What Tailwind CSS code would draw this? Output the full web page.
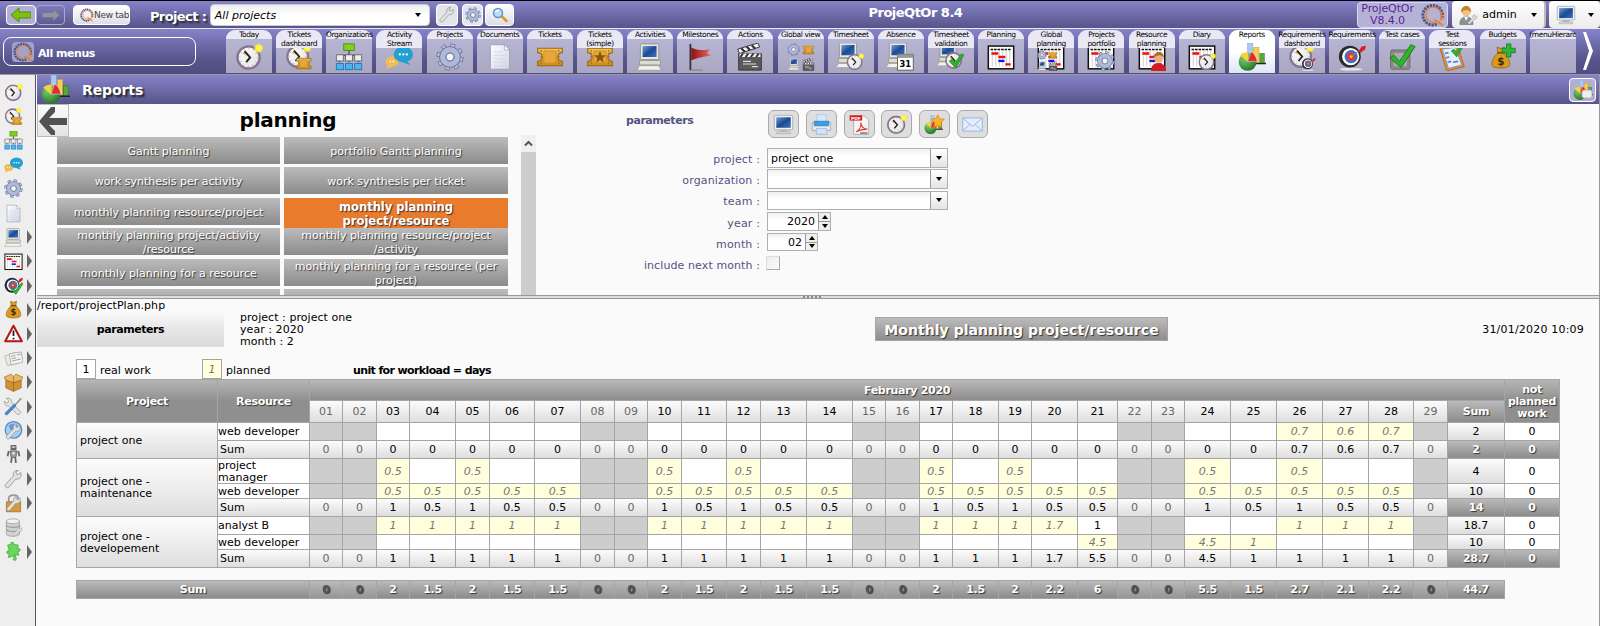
<!DOCTYPE html>
<html lang="en">
<head>
<meta charset="utf-8">
<title>ProjeQtOr 8.4</title>
<script src="https://cdn.jsdelivr.net/npm/@tailwindcss/browser@4"></script>
</head>
<body class="w-[1600px] h-[626px] overflow-hidden bg-[#fafafa] text-black text-[11px] leading-3 font-['DejaVu_Sans',Verdana,sans-serif]">

<svg class="absolute w-0 h-0">
  <defs>
    <linearGradient id="gScreen" x1="0" y1="0" x2="1" y2="1"><stop offset="0" stop-color="#6fa0dc"/><stop offset=".5" stop-color="#1c4a94"/><stop offset="1" stop-color="#3a72bd"/></linearGradient>
    <linearGradient id="gGold" x1="0" y1="0" x2="0" y2="1"><stop offset="0" stop-color="#f5c55a"/><stop offset="1" stop-color="#d08a16"/></linearGradient>
    <linearGradient id="gDoc" x1="0" y1="0" x2="1" y2="1"><stop offset="0" stop-color="#ffffff"/><stop offset="1" stop-color="#cfd3e6"/></linearGradient>
    <linearGradient id="gRed" x1="0" y1="0" x2="1" y2="0"><stop offset="0" stop-color="#8c0f14"/><stop offset="1" stop-color="#e96a6a"/></linearGradient>
    <radialGradient id="gPie" cx=".35" cy=".3" r=".8"><stop offset="0" stop-color="#7fd070"/><stop offset="1" stop-color="#1c6e22"/></radialGradient>
    <radialGradient id="gSun"><stop offset="0" stop-color="#fffb60"/><stop offset=".6" stop-color="#fbf13c"/><stop offset="1" stop-color="#fbf13c" stop-opacity=".2"/></radialGradient>
    <linearGradient id="gFace" x1="0" y1="0" x2="1" y2="1"><stop offset="0" stop-color="#ffffff"/><stop offset="1" stop-color="#e2dfe0"/></linearGradient>
  </defs>
  <symbol id="clockface" viewBox="0 0 32 32"><circle cx="16" cy="16" r="14" fill="url(#gFace)" stroke="#857590" stroke-width="3"/><circle cx="16" cy="16" r="11" fill="none" stroke="#bdb8c2" stroke-dasharray="1 4.7" stroke-width="2"/><path d="M8 11l4-3 5 7z" fill="#d9b54a"/><path d="M11 8l7 8-5 6" fill="none" stroke="#222" stroke-width="2.4"/></symbol>
  <symbol id="clock" viewBox="0 0 32 32"><use href="#clockface" x="1" y="2" width="29" height="29"/><circle cx="27" cy="6" r="5.5" fill="url(#gSun)"/></symbol>
  <symbol id="ticket" viewBox="0 0 32 32"><path d="M2 6h28v5a3 3 0 0 0 0 10v5H2v-5a3 3 0 0 0 0-10z" fill="url(#gGold)" stroke="#9a6410" stroke-width="1.3"/><path d="M6 8v16M26 8v16" stroke="#a87018" stroke-width="1.6" stroke-dasharray="2 1.4"/><path d="M9 9h14v14H9z" fill="#e5a838" stroke="#c08222" stroke-width=".7"/></symbol>
  <symbol id="ticketstar" viewBox="0 0 32 32"><use href="#ticket" width="32" height="32"/><path d="M16 9l2 5h5l-4 3.4 1.6 5.2L16 19.4l-4.600 3.200L13 17.400 9 14h5z" fill="#8a5712"/></symbol>
  <symbol id="tdash" viewBox="0 0 32 32"><use href="#clock" width="30" height="30"/><use href="#ticket" x="11" y="14" width="21" height="19"/></symbol>
  <symbol id="org" viewBox="0 0 32 32"><path d="M16 8v14M5 22v-8h22v8" stroke="#333" fill="none" stroke-width="1.2"/><rect x="10" y="1" width="12" height="7.500" fill="#86cf18" stroke="#3f8f10"/><g fill="#eee" stroke="#666"><rect x="1.500" y="13.500" width="8" height="7"/><rect x="12" y="13.500" width="8" height="7"/><rect x="22.500" y="13.500" width="8" height="7"/></g><g fill="#4fb4ee" stroke="#1a76b8"><rect x="1.500" y="23.500" width="8" height="7"/><rect x="12" y="23.500" width="8" height="7"/><rect x="22.500" y="23.500" width="8" height="7"/></g></symbol>
  <symbol id="chat" viewBox="0 0 32 32"><ellipse cx="8" cy="21" rx="7.500" ry="6" fill="#efbd54"/><path d="M3 24l-1 6 6-3z" fill="#efbd54"/><ellipse cx="21" cy="13" rx="11" ry="9" fill="#21a0d2"/><path d="M24 19l5 6-9-3z" fill="#21a0d2"/><g fill="#fff"><circle cx="17" cy="13" r="1.300"/><circle cx="21" cy="13" r="1.300"/><circle cx="25" cy="13" r="1.300"/><circle cx="6" cy="21" r=".9"/><circle cx="9.500" cy="21" r=".9"/></g></symbol>
  <symbol id="gear" viewBox="0 0 32 32"><circle cx="16" cy="16" r="13" fill="none" stroke="#62719a" stroke-width="5" stroke-dasharray="5.200 5.010"/><circle cx="16" cy="16" r="13" fill="none" stroke="#b8c2dc" stroke-width="3.200" stroke-dasharray="3.800 6.410" stroke-dashoffset="-.7"/><circle cx="16" cy="16" r="8.300" fill="none" stroke="#62719a" stroke-width="8"/><circle cx="16" cy="16" r="8.300" fill="none" stroke="#b0bad6" stroke-width="6.200"/><circle cx="16" cy="16" r="4.500" fill="#f4f4fa" stroke="#62719a"/></symbol>
  <symbol id="doc" viewBox="0 0 32 32"><path d="M5 2h16l6 6v22H5z" fill="url(#gDoc)" stroke="#9a9db5"/><path d="M21 2v6h6z" fill="#fff" stroke="#9a9db5" stroke-width=".8"/><path d="M9 10h10M9 14h14M9 18h14M9 22h14M9 26h14" stroke="#d2d6e6"/></symbol>
  <symbol id="computer" viewBox="0 0 32 32"><rect x="5" y="1" width="21" height="18" rx="1.500" fill="#e9e8e0" stroke="#8c8c84"/><rect x="7.500" y="3.500" width="16" height="12.500" fill="url(#gScreen)"/><path d="M4 20h24v5H4z" fill="#dcdcd4" stroke="#8c8c84" stroke-width=".8"/><path d="M4 26h22l3 5H1z" fill="#f3f3ee" stroke="#9a9a90" stroke-width=".8"/></symbol>
  <symbol id="monitor" viewBox="0 0 32 32"><rect x="2" y="2" width="28" height="22" rx="1.500" fill="#f2f2f2" stroke="#8c9296"/><rect x="5" y="5" width="22" height="16" fill="url(#gScreen)"/><path d="M11 24h10l1 3H10z" fill="#bbb"/><path d="M6 27h20l1 3H5z" fill="#d8dcdc" stroke="#8c9296" stroke-width=".7"/></symbol>
  <symbol id="flag" viewBox="0 0 32 32"><path d="M5 1v30" stroke="#333" stroke-width="2"/><path d="M5 31h14" stroke="#777" stroke-width="1"/><path d="M6 5c7 3 13 4 21 2l-3 5 5 2c-8 2-14 2-23 6z" fill="url(#gRed)"/></symbol>
  <symbol id="clapper" viewBox="0 0 32 32"><path d="M2 7L25 0l2 4.500L4 12z" fill="#f5f5f5" stroke="#222"/><path d="M6 6l4 4M12 4l4 4M18 2.500l4 4" stroke="#333" stroke-width="2.500"/><path d="M3 12h26v19H3z" fill="#5a5a5a" stroke="#333"/><path d="M4 12h24v4H4z" fill="#eee"/><path d="M8 12l-3 4M14 12l-3 4M20 12l-3 4M26 12l-3 4" stroke="#333" stroke-width="2.300"/><path d="M8 21h9M8 24h15M18 27h7" stroke="#ddd" stroke-width="1.300"/></symbol>
  <symbol id="global" viewBox="0 0 32 32"><use href="#gear" x="0" y="0" width="15" height="15"/><use href="#ticket" x="17" y="1" width="15" height="14"/><use href="#computer" x="1" y="17" width="14" height="14"/><use href="#clapper" x="17" y="17" width="15" height="15"/></symbol>
  <symbol id="tsheet" viewBox="0 0 32 32"><use href="#computer" x="-2" y="-1" width="30" height="30"/><use href="#clock" x="10" y="11" width="21" height="21"/></symbol>
  <symbol id="absence" viewBox="0 0 32 32"><use href="#computer" x="-2" y="-1" width="30" height="30"/><rect x="12" y="13" width="18" height="18" fill="#fff" stroke="#555"/><path d="M12 13h18v4H12z" fill="#999"/><text x="21" y="27.500" text-anchor="middle" font-size="9.500" font-weight="bold" font-family="DejaVu Sans">31</text></symbol>
  <symbol id="check" viewBox="0 0 32 32"><path d="M3 17l6-4 5 6L25 4l5 2-15 24z" fill="#2fae2f" stroke="#157a18"/></symbol>
  <symbol id="tsval" viewBox="0 0 32 32"><use href="#computer" x="-1" y="-1" width="28" height="28"/><use href="#clockface" x="9" y="10" width="20" height="20"/><use href="#check" x="12" y="9" width="20" height="22"/></symbol>
  <symbol id="gantt" viewBox="0 0 32 32"><rect x="1.500" y="3.500" width="29" height="26" fill="#fff" stroke="#111" stroke-width="1.700"/><path d="M6 9v18M10 9v18M14 9v18M18 9v18M22 9v18M26 9v18" stroke="#bbb" stroke-width=".8"/><path d="M4 7.500h24" stroke="#111" stroke-width="1.600" stroke-dasharray="3 1"/><path d="M5 12h8M13 16h8M21 24.500h6" stroke="#f01010" stroke-width="2.600"/><path d="M13 20.500h7" stroke="#1010f0" stroke-width="2.600"/></symbol>
  <symbol id="gplan" viewBox="0 0 32 32"><use href="#gantt" width="32" height="32"/><use href="#global" x="0" y="8" width="24" height="24"/></symbol>
  <symbol id="gport" viewBox="0 0 32 32"><use href="#gantt" width="32" height="32"/><use href="#gear" x="9" y="9" width="23" height="23"/></symbol>
  <symbol id="gres" viewBox="0 0 32 32"><use href="#gantt" width="32" height="32"/><path d="M15 32c0-7 3-9 8-9s9 2 9 9z" fill="#d01c24"/><circle cx="23.500" cy="17" r="5.500" fill="#e6b483"/><path d="M18 17c0-9 12-9 11.500 0-2-4-7-4-11.500 0z" fill="#a8702c"/></symbol>
  <symbol id="diary" viewBox="0 0 32 32"><use href="#gantt" width="32" height="32"/><use href="#clock" x="11" y="11" width="21" height="21"/></symbol>
  <symbol id="chart" viewBox="0 0 32 32"><rect x="11" y="0" width="6" height="16" fill="#a9c8f2" stroke="#7fa6da" stroke-width=".6"/><rect x="18" y="5" width="6" height="17" fill="#f3cf58" stroke="#c79b2a" stroke-width=".6"/><rect x="25" y="12" width="5" height="11" fill="#5aa83c" stroke="#356f20" stroke-width=".6"/><path d="M20 23.500h12" stroke="#222" stroke-width="1.600"/><circle cx="11" cy="21.500" r="10.300" fill="url(#gPie)"/><path d="M11 21L2.500 14C5 11 9 10 12 11z" fill="#f7d23b"/><path d="M11 21l4-11c3 1 6 6 7 11z" fill="#e22b2b" stroke="#fff" stroke-width=".5"/></symbol>
  <symbol id="target" viewBox="0 0 32 32"><ellipse cx="15" cy="30" rx="13" ry="1.500" fill="#fff" opacity=".7"/><circle cx="13.500" cy="15.500" r="12.500" fill="#2a2a2a"/><circle cx="14.500" cy="15.500" r="9.800" fill="#fff"/><circle cx="15" cy="15.500" r="7.500" fill="#3d6fc9"/><circle cx="15" cy="15.500" r="4.600" fill="#e63a2b"/><circle cx="15" cy="15.500" r="1.600" fill="#ffd84a"/><path d="M15 15L27 7" stroke="#888" stroke-width="1.200"/><path d="M23 10l4-6 5-1-1 4-5 4z" fill="#d8202a"/></symbol>
  <symbol id="reqdash" viewBox="0 0 32 32"><use href="#clock" width="30" height="30"/><use href="#target" x="15" y="16" width="17" height="16"/></symbol>
  <symbol id="testcase" viewBox="0 0 32 32"><rect x="3" y="8" width="22" height="22" rx="2" fill="#8a8a88" stroke="#666"/><rect x="6.500" y="11.500" width="15" height="15" fill="#aaaab4"/><path d="M2 17l5-3 6 7L26 2l5 2-16 24z" fill="#2fb42c" stroke="#157a18"/></symbol>
  <symbol id="testsess" viewBox="0 0 32 32"><path d="M2 5l20-3 8 25-20 5z" fill="#e8902c" stroke="#b76412"/><path d="M5 7l15-2 7 20-15 4z" fill="#e6effb" stroke="#6f92cc"/><path d="M8 12l4-1M9 17l4-1M11 22l4-1M17 22l6-1" stroke="#5a80c0" stroke-width="2"/><use href="#check" x="13" y="0" width="18" height="17"/></symbol>
  <symbol id="bag" viewBox="0 0 32 32"><path d="M11 2l5 2 5-2-1 7h-8z" fill="#d9a02a" stroke="#8d5f0c"/><path d="M12 10h8c6 5 9 11 8 17-1 4-22 5-24 0-1-6 2-12 8-17z" fill="#d79a1e" stroke="#94650e"/><path d="M11 9.500h10" stroke="#7a500a" stroke-width="2"/><text x="16" y="26" text-anchor="middle" font-size="14" font-weight="bold" fill="#3b2a06" font-family="DejaVu Sans">$</text></symbol>
  <symbol id="budget" viewBox="0 0 32 32"><use href="#bag" x="0" y="1" width="27" height="31"/><path d="M20 1h5v5h5v5h-5v5h-5v-5h-5V6h5z" fill="#2fb53a" stroke="#178024"/></symbol>
  <symbol id="qlogo" viewBox="0 0 32 32"><path d="M21 28A13 13 0 1 1 28 20" fill="none" stroke="#4f5382" stroke-width="4" stroke-dasharray="3 1.200"/><path d="M20 25A10 10 0 1 1 26 19" fill="none" stroke="#ef7d22" stroke-width="1.500"/><path d="M16 22c5-1 10 3 15 9-7-1-10-6-15-9zM25 22c3-4 3-8 1-12 4 5 4 10 1 14z" fill="#ef7d22"/></symbol>
  <symbol id="wrench" viewBox="0 0 32 32"><path d="M28 4l-4 4-3-1-1-3 4-3c-6-1-10 4-8 9L3 24c-3 3 1 8 5 5l12-14c5 2 11-3 8-11z" fill="#e2e2e2" stroke="#8b8b8b" stroke-width="1.300"/></symbol>
  <symbol id="search" viewBox="0 0 32 32"><path d="M19 18l10 10" stroke="#e0982a" stroke-width="5" stroke-linecap="round"/><circle cx="12" cy="12" r="9" fill="#b9dcf8" stroke="#5c94cf" stroke-width="3"/><path d="M7 11c1-4 5-5 8-4" stroke="#fff" stroke-width="2.500" fill="none"/></symbol>
  <symbol id="printer" viewBox="0 0 32 32"><path d="M9 1h14v13H9z" fill="#d6e9fb" stroke="#9ec0e0"/><path d="M2 13h28v12H2z" fill="#e8ecf0" stroke="#8a98a6"/><path d="M5 11h22v7H5z" fill="#3e9be0" stroke="#2573b4"/><path d="M8 22h16v9H8z" fill="#cfe4f8" stroke="#8fb0cf"/></symbol>
  <symbol id="pdf" viewBox="0 0 32 32"><path d="M7 3h17l6 6v22H7z" fill="#f4f4f4" stroke="#999"/><path d="M1 2h19v8H1z" fill="#d31c1c"/><text x="10.500" y="8.500" text-anchor="middle" font-size="6.500" font-weight="bold" fill="#fff" font-family="DejaVu Sans">PDF</text><path d="M11 27c5-3 8-9 7-14 1 6 5 10 10 10-6 0-12 1-17 4z" fill="none" stroke="#e23b3b" stroke-width="1.800"/><path d="M17 29h11" stroke="#666" stroke-width="2"/></symbol>
  <symbol id="starchart" viewBox="0 0 32 32"><use href="#chart" y="2" width="29" height="29"/><path d="M21 1l3 6 7 1-5 5 1 7-6-3-6 3 1-7-5-5 7-1z" fill="#fbb522" stroke="#e07a10"/></symbol>
  <symbol id="mail" viewBox="0 0 32 32"><path d="M1 6h30v20H1z" fill="#e3ecfa" stroke="#9db6e4" stroke-width="1.500"/><path d="M2 7l14 12L30 7M2 25l10-9M30 25l-10-9" fill="none" stroke="#9db6e4" stroke-width="1.500"/></symbol>
  <symbol id="user" viewBox="0 0 32 32"><path d="M3 31c0-9 4-12 10-12s11 3 11 12z" fill="#8c9196" stroke="#666"/><path d="M10 19l3 6 3-6z" fill="#fff"/><circle cx="13" cy="11" r="7" fill="#f0c18c"/><path d="M5 12C4-2 22-2 21 12c-3-5-10-6-16 0z" fill="#c98424"/><use href="#wrench" x="15" y="15" width="17" height="17"/></symbol>
  <symbol id="target2" viewBox="0 0 32 32"><use href="#target" width="32" height="32"/><path d="M12 22l3-2 4 5L30 11l2 2-12 18z" fill="#35b535" stroke="#178020"/></symbol>
  <symbol id="warn" viewBox="0 0 32 32"><path d="M16 3L30 29H2z" fill="#fff" stroke="#b3161c" stroke-width="3.500" stroke-linejoin="round"/><path d="M16 11v9M16 23v3" stroke="#222" stroke-width="3"/></symbol>
  <symbol id="news" viewBox="0 0 32 32"><path d="M1 12l18-6 5 17-18 5z" fill="#eceae4" stroke="#999"/><path d="M9 8l20-3 3 17-20 5z" fill="#f3f1ec" stroke="#8c8c88"/><path d="M12 12l7-1M13 16l7-1M14 20l14-3M22 10l6-1" stroke="#999" stroke-width="1.500"/></symbol>
  <symbol id="box" viewBox="0 0 32 32"><path d="M3 12l13 4 13-4v13l-13 6-13-6z" fill="#cf9136" stroke="#8c5c16"/><path d="M3 12L0 7l12-5 4 4 4-4 12 5-3 5-13 4z" fill="#e9b864" stroke="#8c5c16"/><path d="M16 6v25" stroke="#8c5c16"/></symbol>
  <symbol id="tools" viewBox="0 0 32 32"><path d="M4 2l4 4-1 3-3 1-3-3c-1 6 3 9 7 8l14 14c3 2 7-2 5-5L13 10c1-5-3-9-9-8z" fill="#e4e4e4" stroke="#808080"/><path d="M29 2l-9 10" stroke="#888" stroke-width="2.500"/><path d="M18 14L4 28" stroke="#4c86c6" stroke-width="5.500" stroke-linecap="round"/></symbol>
  <symbol id="globe" viewBox="0 0 32 32"><circle cx="16" cy="15" r="14" fill="#a9cbee" stroke="#5584bd" stroke-width="2"/><path d="M8 7l8-3 7 4-3 6-9 1z" fill="#5f9bdb"/><use href="#wrench" x="2" y="4" width="28" height="28"/></symbol>
  <symbol id="robot" viewBox="0 0 32 32"><rect x="11" y="0" width="10" height="9" rx="2" fill="#666"/><path d="M13 3.500h6" stroke="#eee" stroke-width="2"/><path d="M10 10h12l-2 11h-8z" fill="#9a9a9a" stroke="#444"/><path d="M8 10l-2 9M24 10l2 9M13 21l-1 9M19 21l1 9" stroke="#666" stroke-width="3"/><circle cx="16" cy="14" r="2.500" fill="#ddd"/></symbol>
  <symbol id="lock" viewBox="0 0 32 32"><path d="M8 13V8c0-8 16-8 16 0v5" fill="none" stroke="#999" stroke-width="3"/><path d="M4 13h24v17H4z" fill="#d59842" stroke="#8c5c16"/><use href="#wrench" x="3" y="3" width="27" height="27"/></symbol>
  <symbol id="db" viewBox="0 0 32 32"><path d="M4 5v22c0 5 22 5 22 0V5z" fill="#d2d2d2" stroke="#8a8a8a"/><ellipse cx="15" cy="5.500" rx="11" ry="4" fill="#f2f2f2" stroke="#8a8a8a"/><path d="M4 12c0 5 22 5 22 0M4 19c0 5 22 5 22 0" fill="none" stroke="#8a8a8a" stroke-width="1.500"/><use href="#wrench" x="14" y="14" width="18" height="18"/></symbol>
  <symbol id="puzzle" viewBox="0 0 32 32"><path d="M6 5l6-1c-3-5 6-6 4 0l8 1-1 7c6-3 6 5 0 4l2 6h-7c3 4 4 9 0 9s-2-5 0-8l-11 3 2-7c-6 3-6-6 0-4z" fill="#6ad85c" stroke="#2a9a28"/></symbol>
</svg>

<div class="flex flex-col h-full">
  <!-- top bar -->
  <header class="flex items-center h-[29px] shrink-0 border-t border-black border-b border-b-[#e8e8f0] bg-linear-to-b from-[#8683ca] to-[#57548a] pl-1.5">
    <div class="flex w-[59px] h-5">
      <div class="flex items-center justify-center w-[30px] rounded border border-white bg-[#b1afd3]"><svg class="w-5 h-4" viewBox="0 0 20 16"><path d="M0 8l8-7v4h12v6H8v4z" fill="#7cc010" stroke="#4d8c08"/></svg></div>
      <div class="flex items-center justify-center w-[29px] rounded border border-[#a9a7cd]"><svg class="w-5 h-4" viewBox="0 0 20 16"><path d="M19 8l-7-6v3.500H1v5h11V14z" fill="#9491a6" stroke="#76738c"/></svg></div>
    </div>
    <div class="flex items-center w-[57px] h-5 ml-2 rounded border border-white bg-linear-to-b from-white to-[#dddde8] text-[#444] text-[9px] tracking-[-.3px] whitespace-nowrap overflow-hidden"><svg class="w-[14px] h-[14px] ml-1.5 shrink-0"><use href="#qlogo"/></svg>New tab</div>
    <div class="w-[58px] ml-5 pt-1 text-white text-[13px] font-bold whitespace-nowrap tracking-[-.6px] [text-shadow:2px_2px_2px_#222]">Project :</div>
    <div class="flex items-center justify-between w-[220px] h-[22px] ml-0.5 px-1 rounded-sm border border-[#ccc] bg-linear-to-b from-[#eee] via-white to-white italic pt-0.5">All projects<span class="mr-1 mb-0.5 border-x-[3px] border-x-transparent border-t-[4px] border-t-black"></span></div>
    <div class="flex items-center justify-center w-[22px] h-[22px] ml-1.5 rounded-sm border border-white bg-[#e4e4ea]"><svg class="w-4 h-4"><use href="#wrench"/></svg></div>
    <div class="flex items-center justify-center w-[22px] h-[22px] ml-1 rounded-sm border border-white bg-[#e4e4ea]"><svg class="w-4 h-4"><use href="#gear"/></svg></div>
    <div class="flex items-center justify-center w-[29px] h-[22px] ml-0.5 rounded-sm border border-white bg-linear-to-b from-white to-[#dcdce4]"><svg class="w-4 h-4"><use href="#search"/></svg></div>
    <div class="w-[97px] ml-[354px] text-white text-[13px] font-bold whitespace-nowrap tracking-[-.5px] pb-1">ProjeQtOr 8.4</div>
    <div class="flex items-center justify-between w-[91px] h-[26px] ml-[392px] pl-[3px] rounded border border-[#d9d8ea] bg-[#b5b3d5] text-[#5b1f9c] text-center"><span class="tracking-[-.1px]">ProjeQtOr<br>V8.4.0</span><svg class="w-6 h-6 mr-0.5"><use href="#qlogo"/></svg></div>
    <div class="flex items-center w-[94px] h-[27px] ml-1 pl-1.5 rounded-sm border-r-2 border-[#bbb] bg-linear-to-b from-white to-[#ececec]"><svg class="w-5 h-5"><use href="#user"/></svg><span class="ml-1 w-[45px]">admin</span><span class="ml-1 border-x-[3px] border-x-transparent border-t-[4px] border-t-black"></span></div>
    <div class="flex items-center w-[51px] h-[27px] ml-[3px] pl-[7px] rounded-sm bg-linear-to-b from-white to-[#ececec]"><svg class="w-5 h-5"><use href="#monitor"/></svg><span class="ml-3 border-x-[3px] border-x-transparent border-t-[4px] border-t-black"></span></div>
  </header>

  <!-- menu bar -->
  <nav class="flex h-[46px] shrink-0 border-b border-[#999] bg-linear-to-b from-[#8683ca] via-[#56538a] via-70% to-[#504d80] pl-[3px]">
    <div class="flex items-center w-[193px] h-[29px] mt-2 rounded-lg border border-white text-white font-bold"><span class="ml-2 mr-1 w-[22px] h-5 rounded bg-[#a5a2c8] flex justify-center"><svg class="w-[20px] h-5"><use href="#qlogo"/></svg></span><span class="pt-1 tracking-[-.45px]">All menus</span></div>
    <div id="tabs" class="flex gap-[4.15px] ml-[30px] mt-[1px] h-[43px]"></div>
    <svg class="w-3 h-10 ml-1.5 mt-0.5" viewBox="0 0 12 40"><path d="M1 1h3l7 19L4 39H1l6-19z" fill="#fff"/></svg>
  </nav>

  <div class="flex flex-1 min-h-0">
    <aside id="side" class="flex flex-col w-[36px] shrink-0 bg-[#eee] border-r border-[#555] pl-1 pt-[5px]"></aside>
    <main class="flex flex-col flex-1 min-w-0 ml-px border-r border-[#999]">
      <div class="flex items-center h-[29px] shrink-0 bg-linear-to-b from-[#8683ca] to-[#57548a]">
        <svg class="w-[29px] h-[29px] ml-1"><use href="#chart"/></svg>
        <h1 class="ml-3 text-white text-[14px] font-bold tracking-[-.1px] [text-shadow:2px_2px_2px_#222]">Reports</h1>
        <div class="flex items-center justify-center ml-auto mr-[3px] w-[27px] h-[24px] rounded border border-white bg-[#b1afd3]"><svg class="w-5 h-5"><use href="#chart"/><rect x="9" y="10" width="10" height="8" rx="2" fill="#eee" stroke="#aaa" stroke-width=".7"/></svg></div>
      </div>

      <section class="flex h-[191px] shrink-0 overflow-hidden">
        <div class="flex flex-col w-[500px]">
          <div class="flex h-[31px]">
            <div class="flex items-center justify-center w-8 h-[33px] shrink-0 border border-[#bbb] bg-linear-to-b from-[#fafafa] to-[#e4e4e4]"><svg class="w-[28px] h-[28px]" viewBox="0 0 28 28"><path d="M12 0h4v5l-6 6h18v7H10l6 6v4h-4L0 14.500z" fill="#525252"/></svg></div>
            <h2 class="w-[438px] text-center text-[20px] leading-[33px] font-bold tracking-[-.2px]">planning</h2>
          </div>
          <div class="flex h-40">
            <div id="tiles" class="grid grid-cols-[223px_224px] gap-x-1 ml-5 mt-0.5 content-start"></div>
            <div class="w-[15px] ml-[13px] bg-[#cdcdcd]"><div class="flex items-center justify-center h-[17px] bg-[#f0f0f0]"><svg class="w-[9px] h-[7px]" viewBox="0 0 9 7"><path d="M1 5.500l3.500-3.500L8 5.500" fill="none" stroke="#555" stroke-width="2"/></svg></div></div>
          </div>
        </div>
        <div class="flex flex-col ml-[89px] w-[380px] text-[#545382]">
          <div class="flex h-[43px] pt-1.5">
            <div class="w-[142px] mt-[5px] font-bold tracking-[-.45px]">parameters</div>
            <div id="acts" class="flex gap-[6.800px]"></div>
          </div>
          <div class="grid grid-cols-[134px_1fr] gap-x-[7px] auto-rows-[21.200px]">
            <span class="text-right mt-[7px] tracking-[.15px]">project :</span>
            <div class="flex w-[181px] h-5 mt-px border border-[#b0b0b0] bg-linear-to-b from-[#f0f0f0] to-white to-40% text-black"><span class="flex-1 pl-[3px] pt-1">project one</span><span class="flex justify-center w-[17px] pt-[7px] border-l border-[#999] bg-linear-to-b from-white to-[#e4e4e4]"><i class="h-0 border-x-[3px] border-x-transparent border-t-[4px] border-t-black"></i></span></div>
            <span class="text-right mt-[7px] tracking-[.15px]">organization :</span>
            <div class="flex w-[181px] h-5 mt-px border border-[#b0b0b0] bg-linear-to-b from-[#f0f0f0] to-white to-40%"><span class="flex-1"></span><span class="flex justify-center w-[17px] pt-[7px] border-l border-[#999] bg-linear-to-b from-white to-[#e4e4e4]"><i class="h-0 border-x-[3px] border-x-transparent border-t-[4px] border-t-black"></i></span></div>
            <span class="text-right mt-[7px] tracking-[.15px]">team :</span>
            <div class="flex w-[181px] h-[19px] mt-[2px] border border-[#b0b0b0] bg-linear-to-b from-[#f0f0f0] to-white to-40%"><span class="flex-1"></span><span class="flex justify-center w-[17px] pt-[6px] border-l border-[#999] bg-linear-to-b from-white to-[#e4e4e4]"><i class="h-0 border-x-[3px] border-x-transparent border-t-[4px] border-t-black"></i></span></div>
            <span class="text-right mt-[7px] tracking-[.15px]">year :</span>
            <div class="flex w-16 h-[19px] mt-px border border-[#b0b0b0] bg-linear-to-b from-[#f0f0f0] to-white to-40% text-black"><span class="flex-1 text-right pr-[3px] pt-[3px]">2020</span><span class="flex flex-col w-3 border-l border-[#999] bg-[#eee]"><b class="flex h-[9px] items-center justify-center border-b border-[#999]"><i class="border-x-[3px] border-x-transparent border-b-[4px] border-b-black"></i></b><b class="flex flex-1 items-center justify-center"><i class="border-x-[3px] border-x-transparent border-t-[4px] border-t-black"></i></b></span></div>
            <span class="text-right mt-[7px] tracking-[.15px]">month :</span>
            <div class="flex w-[51px] h-[18px] mt-px border border-[#b0b0b0] bg-linear-to-b from-[#f0f0f0] to-white to-40% text-black"><span class="flex-1 text-right pr-[3px] pt-[3px]">02</span><span class="flex flex-col w-3 border-l border-[#999] bg-[#eee]"><b class="flex h-[9px] items-center justify-center border-b border-[#999]"><i class="border-x-[3px] border-x-transparent border-b-[4px] border-b-black"></i></b><b class="flex flex-1 items-center justify-center"><i class="border-x-[3px] border-x-transparent border-t-[4px] border-t-black"></i></b></span></div>
            <span class="text-right mt-[7px] tracking-[.1px] whitespace-nowrap">include next month :</span>
            <div class="w-[14px] h-[14px] mt-[3px] -ml-px border border-t-[#ddd] border-l-[#ddd] border-b-[#aaa] border-r-[#aaa] bg-linear-to-br from-[#eee] to-[#fafafa]"></div>
          </div>
        </div>
      </section>

      <div class="flex justify-center items-center gap-[2px] h-1 shrink-0 border-y border-[#999] bg-[#dedede] pr-3"><i class="w-[2px] h-0.5 bg-[#888]"></i><i class="w-[2px] h-0.5 bg-[#888]"></i><i class="w-[2px] h-0.5 bg-[#888]"></i><i class="w-[2px] h-0.5 bg-[#888]"></i><i class="w-[2px] h-0.5 bg-[#888]"></i></div>

      <section class="flex flex-col">
        <div class="h-3 leading-[13px] tracking-[.05px]">/report/projectPlan.php</div>
        <div class="flex h-9">
          <div class="w-[187px] h-9 bg-linear-to-b from-[#fbfbfb] via-[#e6e6e6] to-[#dadada] text-center font-bold leading-[37px] tracking-[-.45px]">parameters</div>
          <div class="w-[635px] ml-4 mt-px tracking-[.05px]">project : project one<br>year : 2020<br>month : 2</div>
          <div class="w-[293px] h-6 mt-1.5 border border-[#a5a5a5] bg-linear-to-b from-[#bcbcbc] to-[#8e8e8e] text-white text-center text-[14px] leading-[24px] font-bold whitespace-nowrap tracking-[.05px] [text-shadow:1px_1px_1px_#333]">Monthly planning project/resource</div>
          <div class="ml-auto mr-[15px] mt-[13px] tracking-[.2px]">31/01/2020 10:09</div>
        </div>
        <div class="flex h-5 mt-3 ml-[39px]">
          <div class="w-5 h-5 border border-[#a5a5a5] bg-white text-center leading-[20px]">1</div>
          <div class="w-[102px] ml-1 leading-[23px]">real work</div>
          <div class="w-5 h-5 border border-[#a5a5a5] bg-[#ffffdd] text-center leading-[20px] italic text-[#777]">1</div>
          <div class="w-[123px] ml-1 leading-[23px]">planned</div>
          <div class="font-bold leading-[23px] ml-1 tracking-[-.62px]">unit for workload = days</div>
        </div>
        <div id="plan" class="grid ml-[39px] w-[1484px] border-l border-t border-[#a5a5a5] grid-rows-[21px_22px_18px_18px_25px_15px_18px_18px_15px_18px]"></div>
        <div id="total" class="grid ml-[39px] mt-3 w-[1429px] border-l border-t border-[#a5a5a5] grid-rows-[18px]"></div>
      </section>
    </main>
  </div>
</div>

<script>
const ic = (id, cls) => `<svg class="${cls}"><use href="#${id}"/></svg>`;

const tabs = [['Today','clock'],['Tickets|dashboard','tdash'],['Organizations','org'],['Activity|Stream','chat'],['Projects','gear'],['Documents','doc'],['Tickets','ticket'],['Tickets|(simple)','ticketstar'],['Activities','computer'],['Milestones','flag'],['Actions','clapper'],['Global view','global'],['Timesheet','tsheet'],['Absence','absence'],['Timesheet|validation','tsval'],['Planning','gantt'],['Global|planning','gplan'],['Projects|portfolio','gport'],['Resource|planning','gres'],['Diary','diary'],['Reports','chart'],['Requirements|dashboard','reqdash'],['Requirements','target'],['Test cases','testcase'],['Test|sessions','testsess'],['Budgets','budget'],['(menuHierarc','']];
document.getElementById('tabs').innerHTML = tabs.map(([t, i]) => {
  const lines = t.split('|');
  const bg = t === 'Reports' ? 'bg-linear-to-b from-white via-white to-[#dbe6f6]' : 'bg-linear-to-b from-[#bbb9da] to-[#a9a7c0]';
  const cap = (lines.length > 1 ? 'h-[18px] ' : 'h-[9px] ') + (t === 'Reports' ? 'bg-white' : 'bg-[#e9e8f4]');
  return `<div class="relative w-[46px] h-[43px] rounded-t-[9px] ${bg}">
    ${i ? ic(i, 'absolute left-[9px] top-[13px] w-[28px] h-[28px]') : ''}
    <div class="relative ${cap} rounded-t-[9px] flex flex-col items-center text-[7.500px] leading-[9px] tracking-[-.4px] whitespace-nowrap">${lines.map(l => `<span>${l}</span>`).join('')}</div></div>`;
}).join('');

const side = [['clock'],['tdash'],['org'],['chat'],['gear'],['doc'],['computer',1],['gantt',1],['target2',1],['bag',1],['warn',1],['news',1],['box',1],['tools',1],['globe',1],['robot',1],['wrench',1],['lock',1],['db'],['puzzle',1]];
document.getElementById('side').innerHTML = side.map(([i, a]) =>
  `<div class="flex items-center h-[24.200px] shrink-0">${ic(i, 'w-[19px] h-[19px]')}${a ? '<i class="ml-1 border-y-[7px] border-y-transparent border-l-[5px] border-l-[#666]"></i>' : ''}</div>`).join('');

document.getElementById('acts').innerHTML = ['monitor','printer','pdf','clock','starchart','mail'].map(i =>
  `<div class="flex items-center justify-center w-[31px] h-7 rounded-md border border-[#aaa] bg-[#dedede]">${ic(i, 'w-[21px] h-[21px]')}</div>`).join('');

const tiles = ['Gantt planning','portfolio Gantt planning','work synthesis per activity','work synthesis per ticket','monthly planning resource/project','*monthly planning project/resource','monthly planning project/activity /resource','monthly planning resource/project /activity','monthly planning for a resource','monthly planning for a resource (per project)','',''];
document.getElementById('tiles').innerHTML = tiles.map((t, n) => {
  const on = t[0] === '*';
  return `<div class="h-[30.400px] min-w-0"><div class="flex items-center justify-center text-center text-white leading-[14px] ${on ? 'h-[30px] bg-[#e97b2c] text-[11.500px] font-bold px-12' : 'px-1.5 h-[27px] bg-linear-to-b from-[#bcbcbc] to-[#8b8b8b]'} [text-shadow:1px_1px_1px_#333]"><span class="pt-[3px]">${on ? t.slice(1) : t}</span></div></div>`;
}).join('');

// x positions of the vertical rules, left to right
const edges = [76,217,309,342,376,409,455,489,534,580,614,647,681,726,760,806,852,885,919,952,998,1031,1077,1117,1151,1184,1230,1276,1322,1368,1413,1447,1504,1559];
const widths = edges.slice(1).map((e, i) => e - edges[i]);
const plan = document.getElementById('plan'), total = document.getElementById('total');
plan.style.gridTemplateColumns = widths.map(w => w + 'px').join(' ');
total.style.gridTemplateColumns = widths.slice(0, 32).map(w => w + 'px').join(' ');

const base = 'flex items-center border-r border-b border-[#a5a5a5] min-w-0 overflow-hidden pt-px ';
const HEAD = 'justify-center text-center text-white font-bold tracking-[-.3px] bg-linear-to-b from-[#bababa] to-[#8c8c8c] [text-shadow:1px_1px_1px_#333] ';
const HEAD2 = 'justify-center text-center text-white font-bold tracking-[-.3px] bg-linear-to-b from-[#b6b6b6] via-[#8f8f8f] to-[#8f8f8f] [text-shadow:1px_1px_1px_#333] ';
const LIGHT = 'bg-linear-to-b from-[#fcfcfc] to-[#dedede] ';
const cell = (c, t) => `<div class="${base}${c}">${t}</div>`;
const off = d => [1,2,8,9,15,16,22,23,29].includes(d);
const days = Array.from({length: 29}, (_, i) => i + 1);

let h = cell(HEAD2 + 'row-span-2', 'Project') + cell(HEAD2 + 'row-span-2', 'Resource') + cell(HEAD + 'col-span-30', 'February 2020') + cell(HEAD2 + 'row-span-2', 'not planned<br>work');
h += days.map(d => cell(LIGHT + 'justify-center ' + (off(d) ? 'text-[#666]' : ''), String(d).padStart(2, '0'))).join('') + cell(HEAD + '', 'Sum');

const work = (name, vals, sum) => cell('bg-white whitespace-pre-line', name) +
  days.map(d => {
    if (off(d)) return cell('bg-[#cdcdcd]', '');
    const v = vals[d];
    if (!v) return cell('bg-white', '');
    return v[0] === '!' ? cell('bg-white justify-center', v.slice(1)) : cell('bg-[#ffffdd] justify-center italic text-[#777]', v);
  }).join('') + cell(LIGHT + 'justify-center', sum) + cell('bg-white justify-center', '0');
const sumRow = (vals, sum) => cell(LIGHT + 'pl-[2px]', 'Sum') +
  days.map(d => cell(LIGHT + 'justify-center ' + (off(d) ? 'text-[#666]' : ''), off(d) ? '0' : vals[d])).join('') + cell(HEAD, sum) + cell(HEAD, '0');
const fill = (v, list) => Object.fromEntries(list.map(d => [d, v]));
const on = days.filter(d => !off(d));
const proj = (span, t) => cell(LIGHT + 'pl-[3px] pr-8 ' + span, t);

h += proj('row-span-2', 'project one') + work('web developer', {26:'0.7',27:'0.6',28:'0.7'}, '2') + sumRow({...fill('0', on),26:'0.7',27:'0.6',28:'0.7'}, '2');
h += proj('row-span-3', 'project one - maintenance') + work('project\nmanager', fill('0.5', [3,5,10,12,17,19,24,26]), '4') + work('web developer', fill('0.5', on), '10') + sumRow({...fill('0.5', on), ...fill('1', [3,5,10,12,17,19,24,26])}, '14');
h += proj('row-span-3', 'project one - developement') + work('analyst B', {...fill('1', [3,4,5,6,7,10,11,12,13,14,17,18,19,26,27,28]),20:'1.7',21:'!1'}, '18.7') + work('web developer', {21:'4.5',24:'4.5',25:'1'}, '10') + sumRow({...fill('1', on),20:'1.7',21:'5.5',24:'4.5'}, '28.7');
plan.innerHTML = h;

const tot = {...fill('1.5', on), ...fill('2', [3,5,10,12,17,19]),20:'2.2',21:'6',24:'5.5',26:'2.7',27:'2.1',28:'2.2'};
total.innerHTML = cell(HEAD + 'col-span-2', 'Sum') + days.map(d => off(d)
  ? cell('justify-center font-bold text-[#555] bg-linear-to-b from-[#bababa] to-[#969696] [text-shadow:1px_1px_1px_#333]', '0')
  : cell(HEAD, tot[d])).join('') + cell(HEAD, '44.7');
</script>
</body>
</html>
